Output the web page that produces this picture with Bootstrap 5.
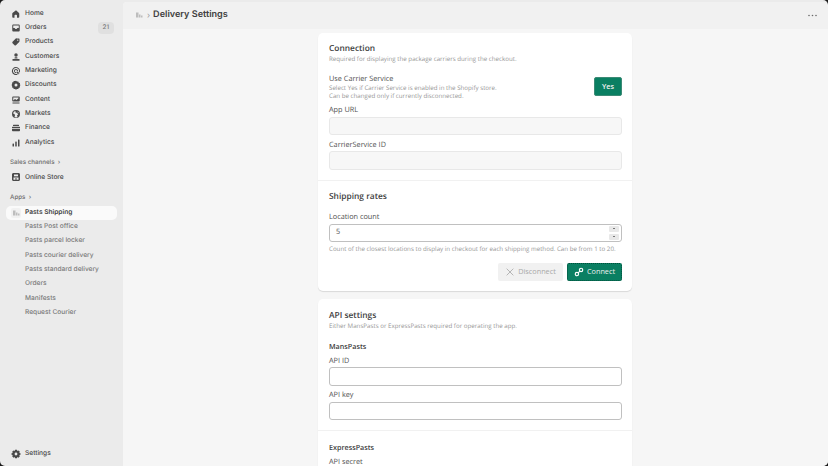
<!DOCTYPE html>
<html lang="en">
<head>
  <meta charset="UTF-8" />
  <meta name="viewport" content="width=device-width, initial-scale=1.0" />
  <title>Delivery Settings</title>
  <link href="https://cdn.jsdelivr.net/npm/bootstrap@5.3.0/dist/css/bootstrap.min.css" rel="stylesheet">
  <style>
    html, body { height: 100%; overflow: hidden; background: #1a1a1a; }
    body { text-rendering: geometricPrecision; }
    .shell { width: 828px; height: 466px; background: #ebebeb; border-radius: 5px; overflow: hidden; }

    .side { width: 123px; flex: none; padding: 6.500px 6px 6px 6px; font-family: Inter, sans-serif; font-size: 6.6px; color: #4a4a4a; }
    .side-row { height: 14.33px; flex: none; padding-left: 5px; padding-right: 3px; gap: 4px; font-weight: 500; white-space: nowrap; }
    .side-row svg { width: 10px; height: 10px; flex: none; fill: #4a4a4a; }
    .side-sub { padding-left: 19px; color: #7a7a7a; font-weight: 450; }
    .side-active { background: #fafafa; border-radius: 5px; font-weight: 600; color: #3f3f3f; }
    .side-active svg { fill: #bdbdbd; }
    .side-head { font-size: 6.200px; color: #6e6e6e; padding-left: 4px; font-weight: 450; height: 14px; flex: none; }
    .count { background: #e0e0e0; color: #7a7a7a; border-radius: 4px; font-size: 6.300px; padding: 1px 5px; }
    .side-tile { width: 10px; height: 10px; background: #f1f1f1; border-radius: 2px; flex: none; }

    .main { flex: 1; min-width: 0; margin-top: 2px; background: #f6f6f6; border-top-left-radius: 4px; border-top-right-radius: 5px; overflow: hidden; }
    .topbar { height: 26.500px; flex: none; background: #f1f1f1; padding: 0 11px 0 11px; font-family: Inter, sans-serif; }
    .page-title { font-size: 9.100px; font-weight: 600; color: #404040; margin: 0; }
    .crumb { color: #9a9a9a; font-size: 8px; margin: 0 3px 0 3px; }
    .dots { color: #6a6a6a; }
    .topbar .side-tile svg { fill: #bdbdbd; }

    .page { width: 314px; margin: 4.500px 0 0 195px; font-family: "Open Sans", sans-serif; color: #404040; }
    .pane { background: #fff; border-radius: 5px; box-shadow: 0 1px 1px rgba(0,0,0,.12); margin-bottom: 8px; }
    .pane-part { padding: 10px 10px 10px 11px; }
    .pane-part + .pane-part { border-top: 1px solid #f1f1f1; }
    .pane-title { font-size: 8.400px; font-weight: 600; line-height: 12px; margin: 0; color: #404040; }
    .pane-note { font-size: 6.200px; line-height: 8.500px; color: #979797; margin: 0; }
    .sub-title { font-size: 7.200px; font-weight: 600; line-height: 11px; margin: 0; color: #404040; }
    .field-label { font-size: 7.300px; line-height: 11px; margin: 0 0 .5px; display: block; color: #505050; }
    .field { height: 18.500px; border: 1px solid #c0c0c0; border-radius: 3px; background: #fff; font-size: 7.300px; padding: 0 6px; color: #505050; }
    .field-off { background: #f7f7f7; border-color: #e8e8e8; }
    .stepper { width: 10px; gap: 2px; margin-right: -4px; }
    .stepper i { display: block; height: 6px; background: #e8e8e8; border-radius: 1px; }
    .stepper i::after { content: ""; display: block; width: 2px; height: 1px; background: #777; margin: 2.500px auto 0; }
    .act { height: 18.500px; border-radius: 2px; font-size: 7.300px; gap: 3px; padding: 0; font-weight: 500; white-space: nowrap; }
    .act svg { width: 10px; height: 10px; }
    .act-yes { width: 28px; height: 19px; background: #0a7f62; color: #f0f0f0; font-weight: 600; border: 1px solid #3c8a75; }
    .act-off { width: 65px; background: #f1f1f1; color: #a8a8a8; border: 0; }
    .act-go { width: 55px; background: #0a7f62; color: #f0f0f0; border: 1px dotted #00503c; }
  </style>
</head>
<body>
  <svg width="0" height="0" class="d-none">
    <symbol id="i-home" viewBox="0 0 20 20"><path d="M10 2.500 3.500 7.300c-.6.400-1 1.100-1 1.900V16c0 .8.700 1.500 1.500 1.500h3V13c0-.8.700-1.500 1.500-1.500h2c.8 0 1.500.7 1.500 1.500v4.500h3c.8 0 1.500-.7 1.500-1.500V9.200c0-.8-.4-1.500-1-1.900z"/></symbol>
    <symbol id="i-orders" viewBox="0 0 20 20"><path fill-rule="evenodd" d="M5 3h10c1.500 0 2.500 1 2.500 2.500v9c0 1.500-1 2.500-2.500 2.500H5c-1.500 0-2.500-1-2.500-2.500v-9C2.500 4 3.500 3 5 3m-.5 2.500V10H7c.6 0 1 .4 1.200 1 .2.700 1 1.200 1.800 1.200s1.600-.5 1.800-1.200c.2-.6.6-1 1.200-1h2.500V5.500c0-.3-.2-.5-.5-.5H5c-.3 0-.5.2-.5.500"/></symbol>
    <symbol id="i-products" viewBox="0 0 20 20"><path fill-rule="evenodd" d="M11.500 3H16c.6 0 1 .4 1 1v4.500c0 .5-.2 1-.6 1.400l-6.500 6.500c-.8.800-2 .8-2.800 0l-4-4c-.8-.8-.8-2 0-2.800l6.500-6.500c.4-.4.900-.6 1.900-.1m2 2.200a1.200 1.200 0 1 0 0 2.500 1.200 1.200 0 0 0 0-2.500"/></symbol>
    <symbol id="i-customers" viewBox="0 0 20 20"><circle cx="10" cy="6" r="3.500"/><path d="M7.500 10.500h5l.5 2.500H7zM3 14h14v3.500H3z"/></symbol>
    <symbol id="i-marketing" viewBox="0 0 20 20"><path fill-rule="evenodd" d="M10 2a8 8 0 0 1 7.500 10.700l-1.900-.8A6 6 0 1 0 12 15.500l.8 1.900A8 8 0 1 1 10 2m0 4a4 4 0 0 1 3.800 5.200l-1.900-.8A2 2 0 1 0 10.500 12l.8 1.800A4 4 0 1 1 10 6"/><path d="m11 11 7 3-3 1-1 3z"/></symbol>
    <symbol id="i-discounts" viewBox="0 0 20 20"><path fill-rule="evenodd" d="m10 1.500 2 1.700 2.600-.4.900 2.500 2.500.9-.4 2.600L19 10l-1.400 2.200.4 2.600-2.500.9-.9 2.500-2.600-.4-2 1.700-2-1.700-2.600.4-.9-2.500-2.500-.9.400-2.600L1 10l1.400-2.200L2 5.200l2.500-.9.900-2.500 2.600.4zM10 7a3 3 0 1 0 0 6 3 3 0 0 0 0-6"/></symbol>
    <symbol id="i-content" viewBox="0 0 20 20"><path fill-rule="evenodd" d="M4 3h12c.8 0 1.500.7 1.500 1.500v7c0 .8-.7 1.500-1.500 1.500H4c-.8 0-1.500-.7-1.500-1.500v-7C2.500 3.700 3.200 3 4 3m.5 2v6l3.500-3 3 2 4-3.500V5zM3 15h14v2H3z"/></symbol>
    <symbol id="i-markets" viewBox="0 0 20 20"><path fill-rule="evenodd" d="M10 2a8 8 0 1 1 0 16 8 8 0 0 1 0-16m-1 2.200a6 6 0 0 0-4.900 5l2.900 1 1 3-1 2.600a6 6 0 0 0 6 .2l-1-3 2.500-2.500-3-3L9 7zM13 4.800l.5 2.200 2.300 1.500a6 6 0 0 0-2.800-3.700"/></symbol>
    <symbol id="i-finance" viewBox="0 0 20 20"><path d="M5 3.500h10c.6 0 1 .4 1 1V6H4V4.500c0-.6.400-1 1-1M3 7.500h14c.6 0 1 .4 1 1V10H2V8.500c0-.6.400-1 1-1M2 11.500h16V15c0 .8-.7 1.500-1.500 1.500h-13C2.700 16.500 2 15.800 2 15z"/></symbol>
    <symbol id="i-analytics" viewBox="0 0 20 20"><rect x="3" y="11" width="3" height="6" rx="1"/><rect x="8.500" y="7" width="3" height="10" rx="1"/><rect x="14" y="3" width="3" height="14" rx="1"/></symbol>
    <symbol id="i-store" viewBox="0 0 20 20"><path fill-rule="evenodd" d="M5 2h10c1.700 0 3 1.300 3 3v10c0 1.700-1.300 3-3 3H5c-1.700 0-3-1.300-3-3V5c0-1.700 1.300-3 3-3m1 3v2.500c0 1 .8 1.500 2 1.500s2-.5 2-1.500c0 1 .8 1.500 2 1.500s2-.5 2-1.500V5zm-1 6v4.500h4V12h2v3.500h4V11z"/></symbol>
    <symbol id="i-settings" viewBox="0 0 20 20"><path fill-rule="evenodd" d="M8 1.500h4l.6 2.500 2.300-1.200 2.800 2.800L16.500 8l2.500.6v3l-2.500.6 1.200 2.300-2.800 2.800-2.300-1.200-.6 2.400H8l-.6-2.400-2.300 1.200-2.800-2.800L3.500 12.200 1 11.600v-3L3.500 8 2.300 5.600l2.800-2.800L7.400 4zM10 7.200a2.800 2.800 0 1 0 0 5.600 2.800 2.800 0 0 0 0-5.600"/></symbol>
    <symbol id="i-app" viewBox="0 0 20 20"><path d="M4 5h5v10H4zM10 9h3v6h-3zM14 11h3v4h-3z"/></symbol>
  </svg>

  <div class="shell d-flex">
    <nav class="side d-flex flex-column">
      <div class="side-row d-flex align-items-center"><svg><use href="#i-home"/></svg>Home</div>
      <div class="side-row d-flex align-items-center"><svg><use href="#i-orders"/></svg>Orders<span class="count ms-auto">21</span></div>
      <div class="side-row d-flex align-items-center"><svg><use href="#i-products"/></svg>Products</div>
      <div class="side-row d-flex align-items-center"><svg><use href="#i-customers"/></svg>Customers</div>
      <div class="side-row d-flex align-items-center"><svg><use href="#i-marketing"/></svg>Marketing</div>
      <div class="side-row d-flex align-items-center"><svg><use href="#i-discounts"/></svg>Discounts</div>
      <div class="side-row d-flex align-items-center"><svg><use href="#i-content"/></svg>Content</div>
      <div class="side-row d-flex align-items-center"><svg><use href="#i-markets"/></svg>Markets</div>
      <div class="side-row d-flex align-items-center"><svg><use href="#i-finance"/></svg>Finance</div>
      <div class="side-row d-flex align-items-center"><svg><use href="#i-analytics"/></svg>Analytics</div>

      <div class="side-head d-flex align-items-center" style="margin-top:6px">Sales channels&nbsp;&nbsp;›</div>
      <div class="side-row d-flex align-items-center" style="margin-top:.5px"><svg><use href="#i-store"/></svg>Online Store</div>

      <div class="side-head d-flex align-items-center" style="margin-top:6px">Apps&nbsp;&nbsp;›</div>
      <div class="side-row side-active d-flex align-items-center" style="margin-top:1px"><span class="side-tile d-flex"><svg><use href="#i-app"/></svg></span>Pasts Shipping</div>
      <div class="side-row side-sub d-flex align-items-center">Pasts Post office</div>
      <div class="side-row side-sub d-flex align-items-center">Pasts parcel locker</div>
      <div class="side-row side-sub d-flex align-items-center">Pasts courier delivery</div>
      <div class="side-row side-sub d-flex align-items-center">Pasts standard delivery</div>
      <div class="side-row side-sub d-flex align-items-center">Orders</div>
      <div class="side-row side-sub d-flex align-items-center">Manifests</div>
      <div class="side-row side-sub d-flex align-items-center">Request Courier</div>

      <div class="side-row d-flex align-items-center mt-auto" style="margin-bottom:-1px"><svg><use href="#i-settings"/></svg>Settings</div>
    </nav>

    <main class="main d-flex flex-column">
      <header class="topbar d-flex align-items-center">
        <span class="side-tile d-flex"><svg width="10" height="10"><use href="#i-app"/></svg></span>
        <span class="crumb">›</span>
        <h1 class="page-title">Delivery Settings</h1>
        <svg class="dots ms-auto" width="9" height="3" fill="currentColor"><circle cx="1" cy="1.500" r=".8"/><circle cx="4.500" cy="1.500" r=".8"/><circle cx="8" cy="1.500" r=".8"/></svg>
      </header>

      <div class="page">
        <section class="pane">
          <div class="pane-part">
            <h2 class="pane-title">Connection</h2>
            <p class="pane-note">Required for displaying the package carriers during the checkout.</p>
            <div class="d-flex justify-content-between align-items-center" style="margin-top:9px">
              <div>
                <span class="field-label" style="margin:1px 0 -1px">Use Carrier Service</span>
                <p class="pane-note">Select Yes if Carrier Service is enabled in the Shopify store.<br>Can be changed only if currently disconnected.</p>
              </div>
              <button class="btn act act-yes d-flex align-items-center justify-content-center">Yes</button>
            </div>
            <label class="field-label" style="margin-top:4.500px">App URL</label>
            <div class="field field-off"></div>
            <label class="field-label" style="margin-top:4.500px">CarrierService ID</label>
            <div class="field field-off"></div>
          </div>
          <div class="pane-part">
            <h2 class="pane-title" style="margin-top:.5px">Shipping rates</h2>
            <label class="field-label" style="margin-top:9px">Location count</label>
            <div class="field d-flex align-items-center justify-content-between">
              <span>5</span>
              <span class="stepper d-flex flex-column"><i></i><i></i></span>
            </div>
            <p class="pane-note" style="margin-top:3px">Count of the closest locations to display in checkout for each shipping method. Can be from 1 to 20.</p>
            <div class="d-flex justify-content-end gap-1" style="margin-top:9px">
              <button class="btn act act-off d-flex align-items-center justify-content-center">
                <svg viewBox="0 0 12 12" fill="none" stroke="#a8a8a8" stroke-width="1"><path d="m2 2 8 8M10 2l-8 8"/></svg>Disconnect
              </button>
              <button class="btn act act-go d-flex align-items-center justify-content-center">
                <svg viewBox="0 0 12 12" fill="none" stroke="#fff" stroke-width="1.400"><circle cx="3.500" cy="8.500" r="2"/><circle cx="8.500" cy="3.500" r="2"/><path d="M5 7l2-2"/></svg>Connect
              </button>
            </div>
          </div>
        </section>

        <section class="pane">
          <div class="pane-part">
            <h2 class="pane-title" style="margin-top:1px">API settings</h2>
            <p class="pane-note">Either MansPasts or ExpressPasts required for operating the app.</p>
            <h3 class="sub-title" style="margin-top:11px">MansPasts</h3>
            <label class="field-label" style="margin-top:3px">API ID</label>
            <div class="field"></div>
            <label class="field-label" style="margin-top:4.500px">API key</label>
            <div class="field"></div>
          </div>
          <div class="pane-part">
            <h3 class="sub-title" style="margin-top:1.500px">ExpressPasts</h3>
            <label class="field-label" style="margin-top:3px">API secret</label>
            <div class="field"></div>
          </div>
        </section>
      </div>
    </main>
  </div>
  <script src="https://cdn.jsdelivr.net/npm/bootstrap@5.3.0/dist/js/bootstrap.bundle.min.js"></script>
</body>
</html>
